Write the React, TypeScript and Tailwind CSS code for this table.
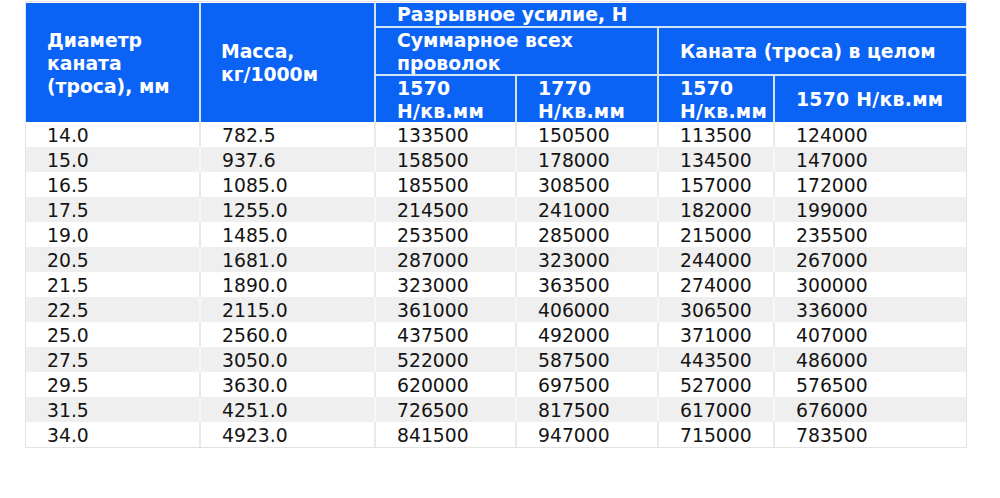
const rows: string[][] = [
  ["14.0", "782.5", "133500", "150500", "113500", "124000"],
  ["15.0", "937.6", "158500", "178000", "134500", "147000"],
  ["16.5", "1085.0", "185500", "308500", "157000", "172000"],
  ["17.5", "1255.0", "214500", "241000", "182000", "199000"],
  ["19.0", "1485.0", "253500", "285000", "215000", "235500"],
  ["20.5", "1681.0", "287000", "323000", "244000", "267000"],
  ["21.5", "1890.0", "323000", "363500", "274000", "300000"],
  ["22.5", "2115.0", "361000", "406000", "306500", "336000"],
  ["25.0", "2560.0", "437500", "492000", "371000", "407000"],
  ["27.5", "3050.0", "522000", "587500", "443500", "486000"],
  ["29.5", "3630.0", "620000", "697500", "527000", "576500"],
  ["31.5", "4251.0", "726500", "817500", "617000", "676000"],
  ["34.0", "4923.0", "841500", "947000", "715000", "783500"],
];

const cols = "grid-cols-[173px_173px_139px_140px_114px_191px]";

export default function App() {
  return (
    <div className="w-[1000px] h-[498px] bg-white pt-[1px] pl-[25px] font-['DejaVu_Sans',Verdana,sans-serif]">
      <div className="w-[942px] border border-[#e2e2e2] pt-px">
        {/* header */}
        <div
          className={`grid ${cols} grid-rows-[23px_46px_46px] gap-[2px] bg-[#d3e4f3] text-white font-bold text-[18.8px] leading-[23px]`}
        >
          <div className="row-span-3 bg-[#0b63f6] pl-[21px] pt-[2px] flex items-center overflow-hidden">
            <div>
              Диаметр
              <br />
              каната
              <br />
              (троса), мм
            </div>
          </div>
          <div className="row-span-3 bg-[#0b63f6] pl-[20px] flex items-center overflow-hidden">
            <div>
              Масса,
              <br />
              кг/1000м
            </div>
          </div>
          <div className="col-span-4 bg-[#0b63f6] pl-[21px] overflow-hidden whitespace-nowrap">
            Разрывное усилие, Н
          </div>
          <div className="col-span-2 bg-[#0b63f6] pl-[21px] pt-px overflow-hidden">
            Суммарное всех
            <br />
            проволок
          </div>
          <div className="col-span-2 bg-[#0b63f6] pl-[21px] flex items-center overflow-hidden whitespace-nowrap">
            Каната (троса) в целом
          </div>
          <div className="bg-[#0b63f6] pl-[21px] pt-px overflow-hidden whitespace-nowrap tracking-[0.3px]">
            1570
            <br />
            Н/кв.мм
          </div>
          <div className="bg-[#0b63f6] pl-[21px] pt-px overflow-hidden whitespace-nowrap tracking-[0.3px]">
            1770
            <br />
            Н/кв.мм
          </div>
          <div className="bg-[#0b63f6] pl-[21px] pt-px overflow-hidden whitespace-nowrap tracking-[0.3px]">
            1570
            <br />
            Н/кв.мм
          </div>
          <div className="bg-[#0b63f6] pl-[21px] flex items-center overflow-hidden whitespace-nowrap tracking-[0.3px]">
            1570 Н/кв.мм
          </div>
        </div>

        {/* body */}
        <div className="text-[18.8px] leading-[25px] text-[#141414]">
          {rows.map((r, i) => (
            <div
              key={i}
              className={`grid ${cols} gap-[2px] ${i % 2 === 0 ? "bg-[#e9e9e9]" : "bg-[#f7f7f7]"}`}
            >
              {r.map((c, j) => (
                <div
                  key={j}
                  className={`h-[25px] pl-[21px] pt-px overflow-hidden ${i % 2 === 0 ? "bg-white" : "bg-[#efefef]"}`}
                >
                  {c}
                </div>
              ))}
            </div>
          ))}
        </div>
      </div>
    </div>
  );
}
